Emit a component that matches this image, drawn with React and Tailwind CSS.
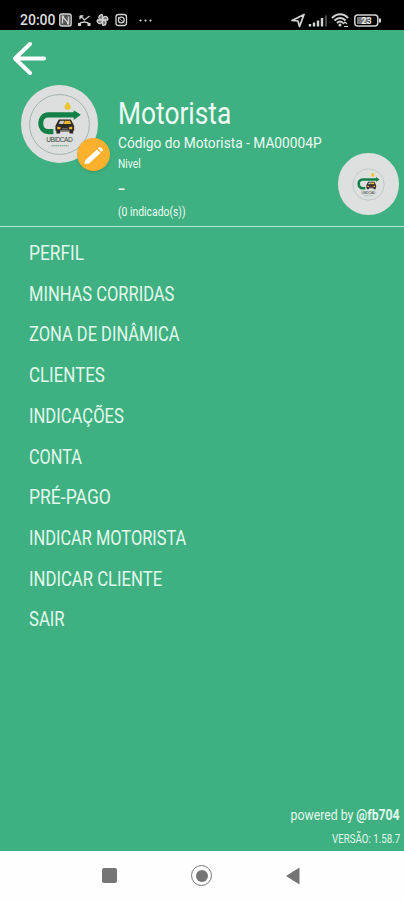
import React from "react";

const menu = [
  { label: "PERFIL", scale: "scale-x-[0.845]" },
  { label: "MINHAS CORRIDAS", scale: "scale-x-[0.805]" },
  { label: "ZONA DE DINÂMICA", scale: "scale-x-[0.805]" },
  { label: "CLIENTES", scale: "scale-x-[0.825]" },
  { label: "INDICAÇÕES", scale: "scale-x-[0.81]" },
  { label: "CONTA", scale: "scale-x-[0.795]" },
  { label: "PRÉ-PAGO", scale: "scale-x-[0.855]" },
  { label: "INDICAR MOTORISTA", scale: "scale-x-[0.8]" },
  { label: "INDICAR CLIENTE", scale: "scale-x-[0.815]" },
  { label: "SAIR", scale: "scale-x-[0.815]" },
];

function Logo({ className }) {
  return (
    <svg viewBox="0 0 66 66" className={className}>
      <circle cx="33" cy="33" r="29.5" fill="none" stroke="#8aa598" strokeWidth="0.7" />
      <path d="M27 40h-5c-10 0-10-16.500 0-16.500h27" fill="none" stroke="#138147" strokeWidth="5" />
      <path d="M47 19l7 4.500-7 5z" fill="#138147" />
      <path d="M41 10.500c2 2.500 3 3.500 3 5a3 3 0 0 1-6 0c0-1.500 1-2.500 3-5z" fill="#efc52f" />
      <g transform="translate(1.4 -0.5) scale(0.92)">
        <path d="M33.500 31h13l2.500 5 1 2v5h-1v3h-4v-2h-10v2h-4v-3h-1v-5l1-2z" fill="#2c2926" />
        <path d="M35 32.500h4.500l-1 3.500h-5z" fill="#c9c8be" />
        <path d="M40 32.500h5.500l1.500 3.500h-8z" fill="#edb62d" />
        <path d="M32 38.500l4 1-1 2h-3zM48 38.500l-4 1 1 2h3z" fill="#f3bd31" />
        <path d="M37 41h6M35 43h10" stroke="#bdb6a6" strokeWidth="0.7" />
      </g>
      <text x="33" y="50.500" textAnchor="middle" fontSize="6.500" fill="#3d4841" textLength="26" className="font-['Liberation_Sans']">UBIDCAD</text>
      <path d="M25 54h17" stroke="#63a783" strokeWidth="1" strokeDasharray="1.5 0.5" />
    </svg>
  );
}

function StatusBar() {
  return (
    <div className="flex h-[30px] shrink-0 items-center bg-black pt-[10px] text-[#dedede]">
      <span className="ml-[20px] w-[36px] origin-left whitespace-nowrap text-[14px] font-medium leading-none">20:00</span>
      <svg viewBox="0 0 98 18" className="ml-[2px] h-[18px] w-[98px]" fill="none" stroke="#d2d2d2" strokeWidth="1.3">
        <rect x="1.700" y="3" width="11.500" height="12" rx="2" fill="#555" />
        <path d="M4.500 12.500v-7l6 7v-7M4 5.500h2M9 12.500h2" />
        <path d="M22.500 5l4 4 5-4M22 4.800v3.500M22 4.800h3.500" />
        <path d="M20.500 13.500c3-3.500 8.500-3.500 11.500 0" strokeWidth="1.500" />
        <path d="M20 13.500h3M29.500 13.500h3" strokeWidth="2.800" />
        <path d="M44.500 9c-7-1-2-7 0-5V9c1-7 7-2 5 0h-5c7 1 2 7 0 5V9c-1 7-7 2-5 0z" fill="#777" />
        <rect x="58" y="3.500" width="10.500" height="11" rx="2.500" />
        <circle cx="63.300" cy="9" r="2.900" />
        <path d="M60 6l6.500 6" strokeWidth="0.8" />
        <g fill="#d2d2d2" stroke="none">
          <circle cx="82.500" cy="9.500" r="1.100" />
          <circle cx="87.500" cy="9.500" r="1.100" />
          <circle cx="92.500" cy="9.500" r="1.100" />
        </g>
      </svg>
      <svg viewBox="0 0 92 18" className="ml-auto mr-[22px] h-[18px] w-[92px]" fill="none" stroke="#d4d4d4">
        <path d="M2 9.500L14 3.500 9.500 15.500 8 10z" strokeWidth="1.700" strokeLinejoin="round" />
        <path d="M20 13v2.500M24 11.500v4M28 9.500v6M32 7v8.500" strokeWidth="2.400" />
        <path d="M36 4.500v11" strokeWidth="2" stroke="#4a4a4a" />
        <path d="M42 7c5-5 11.500-5 16 0M44.500 9.500c3.500-3.500 8-3.500 11 0M47 12c2-2 4-2 6 0" strokeWidth="2" />
        <circle cx="50" cy="14" r="1.500" fill="#d4d4d4" stroke="none" />
        <path d="M53 13l2-2 2 2M54 15.500h4" strokeWidth="1.200" />
        <rect x="64.800" y="4" width="23" height="11" rx="3" strokeWidth="1.500" />
        <rect x="67" y="6" width="12" height="7" fill="#777" stroke="none" />
        <path d="M90 7.500v4" strokeWidth="2" />
        <text x="76.500" y="12.800" textAnchor="middle" fontSize="9" fontWeight="700" fill="#eee" stroke="none">23</text>
      </svg>
    </div>
  );
}

function Header() {
  return (
    <header className="h-[197px] shrink-0 border-b border-[#b9e5d0]">
      <button className="ml-[12px] mt-[11px] block h-[35px] w-[35px]">
        <svg viewBox="0 0 35 35" fill="none" stroke="white" strokeWidth="4" strokeLinecap="round" strokeLinejoin="round">
          <path d="M18 3L3 17.500 18 32M3 17.500h29" />
        </svg>
      </button>
      <div className="flex">
        <div className="relative ml-[21px] mt-[9px] flex h-[78px] w-[77px] shrink-0 items-center justify-center rounded-full bg-[#dddede]">
          <Logo className="h-[67px] w-[67px]" />
          <span className="absolute left-[56px] top-[53px] flex h-[33px] w-[33px] items-center justify-center rounded-full bg-[#fbb02e] shadow-sm">
            <svg viewBox="0 0 24 24" className="h-[24px] w-[24px]" fill="white">
              <path d="M3 17.500L15 6.500l3.500 3.500L7 20.500l-4.500.5zM16 5.500l1-1c1.500-1.500 5 2 3.500 3.500l-1 1z" />
            </svg>
          </span>
        </div>
        <div className="ml-[20px] mt-[20px] w-[210px] whitespace-nowrap text-[#eefbf4]">
          <h1 className="w-max origin-left scale-x-[0.85] text-[31px] font-normal leading-[36px]">Motorista</h1>
          <p className="mt-[2px] w-max origin-left scale-x-[0.885] text-[15.500px] leading-[18px]">Código do Motorista - MA00004P</p>
          <p className="mt-[5px] w-max origin-left scale-x-[0.86] text-[12px] leading-[14px]">Nivel</p>
          <p className="mt-[5px] w-max origin-left scale-x-125 text-[20px] leading-[24px]">-</p>
          <p className="mt-[5px] w-max origin-left scale-x-[0.865] text-[12px] leading-[14px]">(0 indicado(s))</p>
        </div>
        <div className="ml-[10px] mt-[77px] flex h-[62px] w-[61px] shrink-0 items-center justify-center rounded-full bg-[#dedfdf]">
          <Logo className="h-[35px] w-[35px]" />
        </div>
      </div>
    </header>
  );
}

export default function App() {
  return (
    <div className="flex h-[900px] w-[404px] flex-col overflow-hidden bg-[#3eb081] font-[Roboto,sans-serif]">
      <StatusBar />
      <Header />
      <nav className="ml-[29px] mt-[6px] flex flex-col text-[#e3f8ed]">
        {menu.map(({ label, scale }) => (
          <a key={label} className={"w-max origin-left whitespace-nowrap text-[20.500px] font-normal leading-[40.700px] " + scale}>
            {label}
          </a>
        ))}
      </nav>
      <footer className="mr-[4px] mt-auto flex flex-col items-end whitespace-nowrap pb-[5px] text-[#e3f8ed]">
        <p className="origin-right scale-x-[0.875] text-[14px] leading-[18px]">
          powered by <b>@fb704</b>
        </p>
        <p className="mt-[8px] origin-right scale-x-[0.81] text-[12px] leading-[14px]">VERSÃO: 1.58.7</p>
      </footer>
      <div className="flex h-[49px] shrink-0 items-center bg-[#fefefe]">
        <span className="ml-[102px] h-[15px] w-[15px] rounded-[2px] bg-[#757575]" />
        <span className="ml-[74px] flex h-[21px] w-[21px] items-center justify-center rounded-full border-[1.500px] border-[#757575]">
          <span className="h-[12px] w-[12px] rounded-full bg-[#757575]" />
        </span>
        <svg viewBox="0 0 15 18" className="ml-[73px] h-[18px] w-[15px]" fill="#757575">
          <path d="M1 9L14.500 0.500v17z" />
        </svg>
      </div>
    </div>
  );
}
